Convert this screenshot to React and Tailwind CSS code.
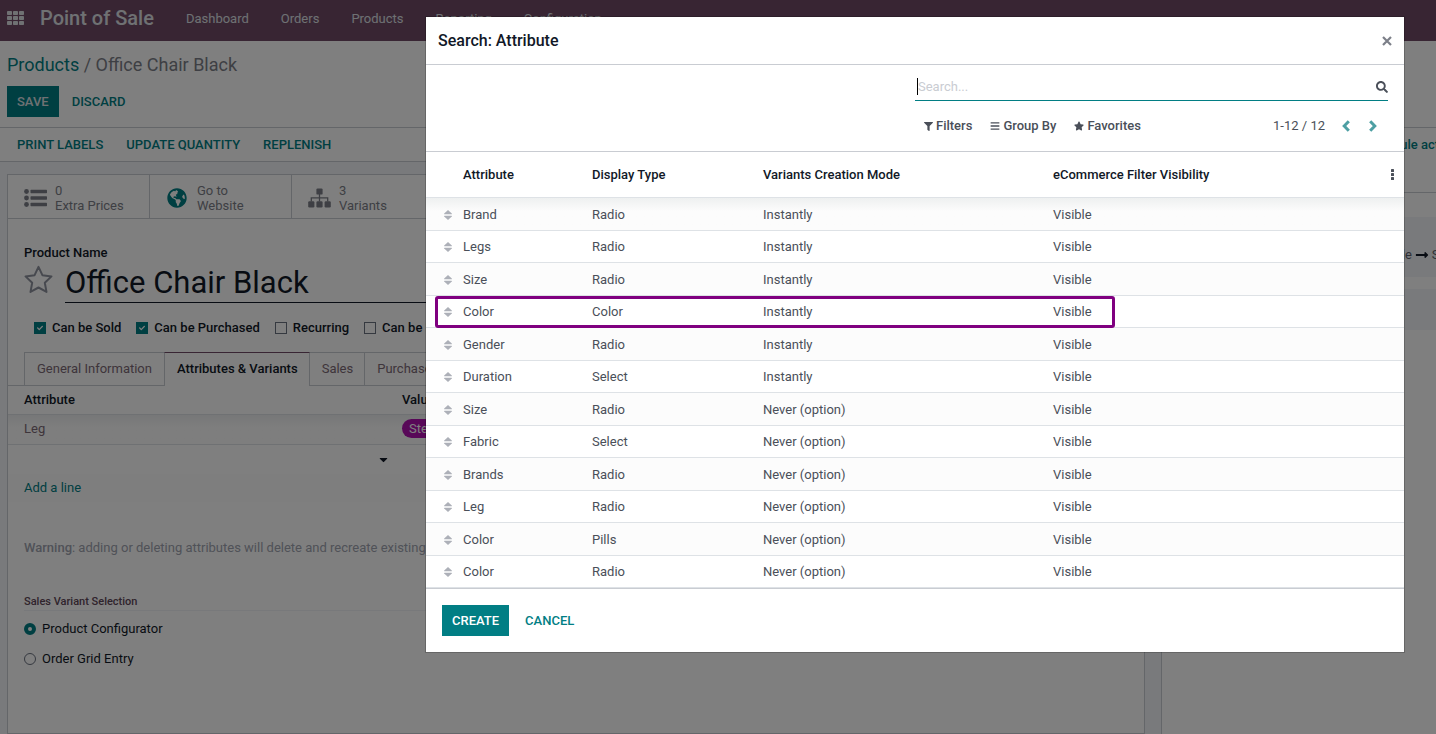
import React, { useState } from "react";
import {
  FaBars,
  FaCaretDown,
  FaCheck,
  FaFilter,
  FaGlobeAmericas,
  FaLongArrowAltRight,
  FaSearch,
  FaStar,
} from "react-icons/fa";

const menus = ["Dashboard", "Orders", "Products", "Reporting", "Configuration"];

const attributes = [
  { name: "Brand", display: "Radio", mode: "Instantly" },
  { name: "Legs", display: "Radio", mode: "Instantly" },
  { name: "Size", display: "Radio", mode: "Instantly" },
  { name: "Color", display: "Color", mode: "Instantly", highlight: true },
  { name: "Gender", display: "Radio", mode: "Instantly" },
  { name: "Duration", display: "Select", mode: "Instantly" },
  { name: "Size", display: "Radio", mode: "Never (option)" },
  { name: "Fabric", display: "Select", mode: "Never (option)" },
  { name: "Brands", display: "Radio", mode: "Never (option)" },
  { name: "Leg", display: "Radio", mode: "Never (option)" },
  { name: "Color", display: "Pills", mode: "Never (option)" },
  { name: "Color", display: "Radio", mode: "Never (option)" },
];

const AppsIcon = () => (
  <svg viewBox="0 0 17 14" className="h-[14px] w-[17px]" fill="currentColor">
    {[0, 5, 10].map((y) =>
      [0, 6, 12].map((x) => (
        <rect key={`${x}-${y}`} x={x} y={y} width="5" height="4" rx="0.8" />
      ))
    )}
  </svg>
);

const ListIcon = () => (
  <svg viewBox="0 0 23 18" className="h-[18px] w-[23px]" fill="currentColor">
    {[2.5, 9, 15.5].map((y) => (
      <g key={y}>
        <circle cx="2.5" cy={y} r="2.4" />
        <rect x="6.5" y={y - 1.7} width="16.5" height="3.4" rx="0.6" />
      </g>
    ))}
  </svg>
);

const SitemapIcon = () => (
  <svg viewBox="0 0 23 20" className="h-5 w-[23px]" fill="currentColor">
    <rect x="8.4" y="0.4" width="6.2" height="6.2" rx="1.2" />
    <rect x="0.2" y="13.2" width="6.2" height="6.2" rx="1.2" />
    <rect x="8.4" y="13.2" width="6.2" height="6.2" rx="1.2" />
    <rect x="16.6" y="13.2" width="6.2" height="6.2" rx="1.2" />
    <path
      d="M11.5 6v7.5M3.3 13.5V9.8h16.4v3.7"
      fill="none"
      stroke="currentColor"
      strokeWidth="1.3"
    />
  </svg>
);

const StarIcon = () => (
  <svg
    viewBox="0 0 29 29"
    className="h-[29px] w-[29px]"
    fill="none"
    stroke="currentColor"
    strokeWidth="2"
    strokeLinejoin="round"
  >
    <path d="M14.5 1.8 18.4 10.2 27.5 11.4 20.8 17.8 22.5 26.9 14.5 22.5 6.5 26.9 8.2 17.8 1.5 11.4 10.6 10.2z" />
  </svg>
);

const HandleIcon = () => (
  <svg viewBox="0 0 8 10" className="h-[10px] w-2" fill="currentColor">
    <path d="M4 0 7.8 3.6Q8.1 4.3 7.4 4.3H.6Q-.1 4.3 .2 3.6z" />
    <path d="M4 10 7.8 6.4Q8.1 5.7 7.4 5.7H.6Q-.1 5.7 .2 6.4z" />
  </svg>
);

const CloseIcon = () => (
  <svg viewBox="0 0 10 10" className="h-[10px] w-[10px]" stroke="currentColor" strokeWidth="2.2">
    <path d="M1 1l8 8M9 1l-8 8" />
  </svg>
);

const ChevronIcon = ({ d }) => (
  <svg viewBox="0 0 8 12" className="h-3 w-2" fill="none" stroke="currentColor" strokeWidth="3">
    <path d={d} />
  </svg>
);

const DotsIcon = () => (
  <svg viewBox="0 0 3 11" className="h-[11px] w-[3px]" fill="currentColor">
    <rect x="0" y="0" width="3" height="3" rx="0.6" />
    <rect x="0" y="4" width="3" height="3" rx="0.6" />
    <rect x="0" y="8" width="3" height="3" rx="0.6" />
  </svg>
);

const CheckOption = ({ label, checked }) => (
  <label className="flex items-center gap-[6px] font-medium text-[#111827]">
    <span className="relative flex h-3 w-3">
      <input
        type="checkbox"
        defaultChecked={checked}
        className="peer h-3 w-3 appearance-none border border-[#6b7280] checked:border-[#017e84] checked:bg-[#017e84]"
      />
      <FaCheck className="pointer-events-none absolute left-[3px] top-[3px] hidden h-[6px] w-[6px] text-white peer-checked:block" />
    </span>
    {label}
  </label>
);

const StatButton = ({ icon, top, bottom }) => (
  <button className="flex w-[142px] items-center gap-2 border-r border-[#c9ccd2] pl-[15px] pt-[2px] text-left text-[#7c7f88]">
    <span className="flex w-6 justify-center">{icon}</span>
    <span className="leading-[15px]">
      <span className="block">{top}</span>
      <span className="block">{bottom}</span>
    </span>
  </button>
);

const ProductForm = () => (
  <div className="flex min-h-0 flex-1 flex-col">
    <header className="flex h-[41px] shrink-0 items-center bg-[#714b67] pb-[5px] pl-[7px] text-[#dee2e6]">
      <button aria-label="Apps">
        <AppsIcon />
      </button>
      <a href="#" className="ml-4 mr-4 text-[20px] font-medium">
        Point of Sale
      </a>
      <nav className="flex pt-px">
        {menus.map((menu) => (
          <a key={menu} href="#" className="px-4">
            {menu}
          </a>
        ))}
      </nav>
    </header>

    <div className="h-[87px] shrink-0 border-b border-[#c9ccd2] px-[7px] pt-3">
      <div className="text-[18px] leading-6 text-[#7c7f88]">
        <a href="#" className="text-[#017e84]">
          Products
        </a>{" "}
        / Office Chair Black
      </div>
      <div className="mt-[9px] flex gap-[3px] font-medium">
        <button className="h-[31px] bg-[#017e84] px-[10px] text-[#dee2e6]">SAVE</button>
        <button className="h-[31px] px-[10px] text-[#017e84]">DISCARD</button>
      </div>
    </div>

    <div className="flex min-h-0 flex-1">
      <main className="flex min-w-0 flex-1 flex-col">
        <div className="flex h-[34px] shrink-0 gap-[23px] border-b border-[#c9ccd2] px-[17px] font-medium text-[#017e84]">
          <button>PRINT LABELS</button>
          <button>UPDATE QUANTITY</button>
          <button>REPLENISH</button>
        </div>

        <div className="flex min-h-0 flex-1 flex-col bg-[#f3f5f8] pl-[7px] pr-4 pt-3">
          <section className="min-h-0 flex-1 overflow-hidden border border-[#c9ccd2] bg-white">
            <div className="flex h-[44px] border-b border-[#c9ccd2]">
              <StatButton icon={<ListIcon />} top="0" bottom="Extra Prices" />
              <StatButton
                icon={<FaGlobeAmericas className="h-5 w-5 text-[#017e84]" />}
                top="Go to"
                bottom="Website"
              />
              <StatButton icon={<SitemapIcon />} top="3" bottom="Variants" />
            </div>

            <div className="px-4 pt-[26px]">
              <label htmlFor="product-name" className="block leading-4 font-medium text-[#111827]">
                Product Name
              </label>
              <div className="flex items-start gap-3">
                <button aria-label="Favorite" className="mt-1 text-[#8f939f]">
                  <StarIcon />
                </button>
                <input
                  id="product-name"
                  defaultValue="Office Chair Black"
                  className="h-[42px] min-w-0 flex-1 border-b border-[#111827] pt-1 text-[31px] text-[#111827] outline-none"
                />
              </div>
              <div className="mt-[15px] flex gap-[15px] pl-[10px]">
                <CheckOption label="Can be Sold" checked />
                <CheckOption label="Can be Purchased" checked />
                <CheckOption label="Recurring" />
                <CheckOption label="Can be Expensed" />
              </div>
            </div>

            <div className="mt-[14px] flex h-[34px] border-b border-[#c9ccd2] pl-4 text-[#7c6a76]">
              <button className="h-[33px] border-l border-t border-[#c9ccd2] px-3">
                General Information
              </button>
              <button className="h-[34px] border-x border-t border-x-[#c9ccd2] border-t-[#714b67] bg-white pl-3 pr-[11px] font-medium text-[#111827]">
                Attributes &amp; Variants
              </button>
              <button className="h-[33px] border-r border-t border-[#c9ccd2] pl-3 pr-[11px]">
                Sales
              </button>
              <button className="h-[33px] border-r border-t border-[#c9ccd2] pl-3 pr-[11px]">
                Purchase
              </button>
            </div>

            <table className="w-full table-fixed border-separate border-spacing-0 text-left">
              <thead>
                <tr className="h-[29px] text-[#111827]">
                  <th className="w-[394px] border-b border-[#dee2e6] pl-4 font-medium">Attribute</th>
                  <th className="border-b border-[#dee2e6] font-medium">Values</th>
                </tr>
              </thead>
              <tbody>
                <tr className="h-[30px] bg-gradient-to-b from-[#eeeff1] to-[#fcfcfc] to-40% text-[#7c6a76]">
                  <td className="border-b border-[#dee2e6] pl-4">Leg</td>
                  <td className="border-b border-[#dee2e6]">
                    <span className="inline-block h-[19px] rounded-full bg-[#b010b0] px-[7px] leading-[19px] text-white">
                      Steel
                    </span>
                  </td>
                </tr>
                <tr className="h-[29px]">
                  <td className="pl-4">
                    <div className="relative flex items-center justify-end pr-3">
                      <select aria-label="New attribute" className="w-full appearance-none" />
                      <FaCaretDown className="pointer-events-none absolute right-3 h-[13px] w-[13px] text-[#111827]" />
                    </div>
                  </td>
                  <td></td>
                </tr>
                <tr className="h-[28px] bg-[#fcfcfc]">
                  <td colSpan={2} className="pl-4">
                    <a href="#" className="text-[#017e84]">
                      Add a line
                    </a>
                  </td>
                </tr>
              </tbody>
            </table>

            <div className="px-4">
              <p className="mt-9 truncate leading-5 text-[#a0a4b0]">
                <b className="font-medium">Warning</b>: adding or deleting attributes will delete and
                recreate existing product variants and lead to the loss of their possible customizations.
              </p>
              <h2 className="mt-[35px] border-b border-[#f1f3f6] text-[11px] leading-[17px] font-medium text-[#5f4858]">
                Sales Variant Selection
              </h2>
              <div className="mt-2 flex flex-col gap-[10px] text-[#111827]">
                <label className="flex items-center gap-[6px] leading-5">
                  <input
                    type="radio"
                    name="selection"
                    defaultChecked
                    className="h-3 w-3 appearance-none rounded-full border border-[#6b7280] checked:border-4 checked:border-[#017e84]"
                  />
                  Product Configurator
                </label>
                <label className="flex items-center gap-[6px] leading-5">
                  <input
                    type="radio"
                    name="selection"
                    className="h-3 w-3 appearance-none rounded-full border border-[#6b7280] checked:border-4 checked:border-[#017e84]"
                  />
                  Order Grid Entry
                </label>
              </div>
            </div>
          </section>
        </div>
      </main>

      <aside className="w-[275px] shrink-0 overflow-hidden border-l border-[#c9ccd2] bg-white">
        <div className="flex h-[65px] items-start border-b border-[#c9ccd2] pl-[202px] pt-[7px]">
          <button className="leading-5 font-medium whitespace-nowrap text-[#017e84]">
            Schedule activity
          </button>
        </div>
        <div className="mt-6 flex h-[60px] items-center gap-[3px] bg-[#f3f5f8] pl-[225px] pt-4 whitespace-nowrap text-[#5f636f]">
          Sale <FaLongArrowAltRight className="h-[14px] w-[14px] shrink-0 text-[#111827]" /> Sales
        </div>
        <div className="mt-3 h-[41px] bg-[#f3f5f8]"></div>
      </aside>
    </div>
  </div>
);

const AttributeDialog = () => {
  const [search, setSearch] = useState("");

  const rows = attributes.filter((item) =>
    item.name.toLowerCase().includes(search.toLowerCase())
  );

  return (
    <div
      role="dialog"
      aria-label="Search: Attribute"
      className="w-full max-w-[980px] self-start border border-black/20 bg-white bg-clip-padding"
    >
      <div className="flex h-12 items-center justify-between border-b border-[#c9ccd2] px-3">
        <h1 className="text-[16px] font-medium text-[#111827]">Search: Attribute</h1>
        <button aria-label="Close" className="text-[#7c7f88]">
          <CloseIcon />
        </button>
      </div>

      <div className="flex h-[87px] flex-col items-end border-b border-[#c9ccd2] px-4 pt-2">
        <div className="flex h-7 w-1/2 items-center border-b border-[#017e84] pl-[2px]">
          <span className="h-[17px] w-px bg-black"></span>
          <input
            aria-label="Search"
            placeholder="Search..."
            value={search}
            onChange={(e) => setSearch(e.target.value)}
            className="min-w-0 flex-1 caret-transparent outline-none placeholder:text-[#c9ccd2]"
          />
          <button aria-label="Run search" className="text-[#4a4f59]">
            <FaSearch className="h-3 w-3" />
          </button>
        </div>
        <div className="flex h-[50px] w-1/2 items-center pl-[9px] text-[#4a4f59]">
          <button className="flex items-center gap-[3px] font-medium">
            <FaFilter className="h-[9px] w-[9px]" />
            Filters
          </button>
          <button className="ml-[18px] flex items-center gap-[3px] font-medium">
            <FaBars className="h-[10px] w-[10px]" />
            Group By
          </button>
          <button className="ml-[18px] flex items-center gap-[3px] font-medium">
            <FaStar className="h-[10px] w-[10px]" />
            Favorites
          </button>
          <span className="ml-auto">1-12 / 12</span>
          <button aria-label="Previous" className="ml-[17px] text-[#4d9fa3]">
            <ChevronIcon d="M6.8 1.2 2.2 6l4.6 4.8" />
          </button>
          <button aria-label="Next" className="ml-[19px] mr-[11px] text-[#4d9fa3]">
            <ChevronIcon d="M1.2 1.2 5.8 6l-4.6 4.8" />
          </button>
        </div>
      </div>

      <table className="w-full table-fixed border-separate border-spacing-0 text-left">
        <thead>
          <tr className="h-[46px] text-[#111827]">
            <th className="w-[33px] border-b border-[#dee2e6]"></th>
            <th className="w-[129px] border-b border-[#dee2e6] px-1 font-medium">Attribute</th>
            <th className="w-[171px] border-b border-[#dee2e6] px-1 font-medium">Display Type</th>
            <th className="w-[290px] border-b border-[#dee2e6] px-1 font-medium">
              Variants Creation Mode
            </th>
            <th className="border-b border-[#dee2e6] pl-1 pr-[10px] font-medium">
              <div className="flex items-center justify-between">
                eCommerce Filter Visibility
                <button aria-label="Optional columns" className="text-[#4a4f59]">
                  <DotsIcon />
                </button>
              </div>
            </th>
          </tr>
        </thead>
        <tbody className="text-[#4a4f59]">
          {rows.map((item, index) => (
            <tr
              key={index}
              className="relative h-8 odd:h-[33px] odd:bg-[#fcfcfc] first:bg-gradient-to-b first:from-[#eef0f0] first:to-[#fcfcfc] first:to-40% odd:[&>td]:pt-px"
            >
              <td className="border-b border-[#dee2e6] pl-[18px] text-[#adb0b8]">
                <HandleIcon />
                {item.highlight && (
                  <span className="absolute top-0 bottom-0 left-[9px] right-[289px] rounded-[3px] border-3 border-[#800080]"></span>
                )}
              </td>
              <td className="border-b border-[#dee2e6] px-1">{item.name}</td>
              <td className="border-b border-[#dee2e6] px-1">{item.display}</td>
              <td className="border-b border-[#dee2e6] px-1">{item.mode}</td>
              <td className="border-b border-[#dee2e6] px-1">Visible</td>
            </tr>
          ))}
        </tbody>
      </table>

      <div className="flex gap-[6px] border-t border-[#c9ccd2] px-4 py-4 font-medium">
        <button className="h-[31px] bg-[#017e84] px-[10px] text-white">CREATE</button>
        <button className="h-[31px] px-[10px] text-[#017e84]">CANCEL</button>
      </div>
    </div>
  );
};

const App = () => {
  return (
    <div className="flex h-screen flex-col overflow-hidden bg-white font-[Roboto,sans-serif] text-[13px]">
      <ProductForm />
      <div className="fixed inset-0 flex justify-end bg-black/50 pl-4 pr-[31px] pt-4">
        <AttributeDialog />
      </div>
    </div>
  );
};

export default App;
